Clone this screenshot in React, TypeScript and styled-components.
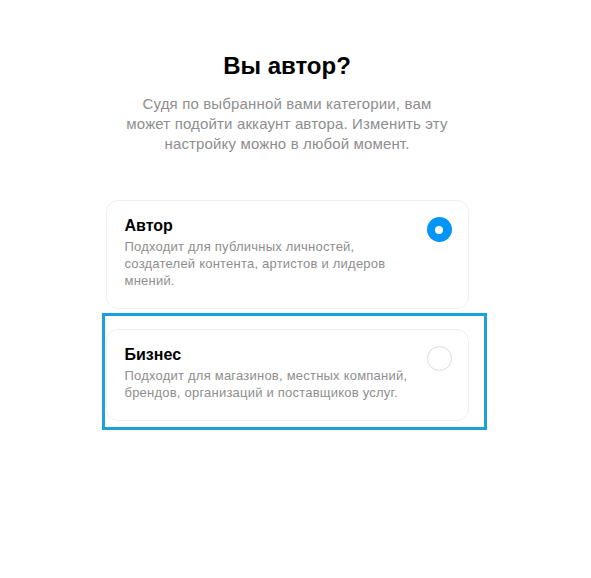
import React from "react";
import styled, { createGlobalStyle } from "styled-components";

const Global = createGlobalStyle`
  html, body { margin: 0; padding: 0; background: #ffffff; }
  body { font-family: "Liberation Sans", Arial, sans-serif; -webkit-font-smoothing: antialiased; }
`;

const Page = styled.main`
  width: 591px;
  min-height: 578px;
  box-sizing: border-box;
  padding: 51px 17px 0 0;
  display: flex;
  flex-direction: column;
  align-items: center;
`;

const Title = styled.h1`
  margin: 0;
  font-size: 24px;
  line-height: 30px;
  font-weight: 700;
  color: #000000;
`;

const Subtitle = styled.p`
  margin: 13px 0 0;
  font-size: 15px;
  line-height: 20px;
  letter-spacing: 0.15px;
  color: #8e8e8e;
  text-align: center;
`;

const Options = styled.div`
  margin-top: 46px;
  width: 363px;
  display: flex;
  flex-direction: column;
  gap: 20px;
`;

const CardWrap = styled.div`
  position: relative;
`;

const Highlight = styled.div`
  position: absolute;
  top: -16px;
  left: -4px;
  right: -18px;
  bottom: -9px;
  border: 3px solid #1ba0dc;
  pointer-events: none;
`;

const Card = styled.div`
  box-sizing: border-box;
  border: 1px solid #efefef;
  border-radius: 12px;
  padding: 15px 16px 19px 18px;
  display: flex;
  align-items: flex-start;
  justify-content: space-between;
  gap: 12px;
  background: #ffffff;
`;

const Texts = styled.div`
  display: flex;
  flex-direction: column;
`;

const CardTitle = styled.div`
  font-size: 16px;
  line-height: 20px;
  font-weight: 700;
  color: #000000;
`;

const CardDesc = styled.div`
  margin-top: 2px;
  font-size: 13px;
  line-height: 17px;
  letter-spacing: 0.22px;
  color: #8e8e8e;
`;

const Radio = styled.span<{ $checked?: boolean }>`
  flex: none;
  box-sizing: border-box;
  width: 25px;
  height: 25px;
  border-radius: 50%;
  margin-top: 1px;
  display: flex;
  align-items: center;
  justify-content: center;
  background: ${(p) => (p.$checked ? "#0095f6" : "#ffffff")};
  border: ${(p) => (p.$checked ? "none" : "1.5px solid #dbdbdb")};
`;

const Dot = styled.span`
  width: 8px;
  height: 8px;
  border-radius: 50%;
  background: #ffffff;
`;

export default function App() {
  return (
    <>
      <Global />
      <Page>
        <Title>Вы автор?</Title>
        <Subtitle>
          Судя по выбранной вами категории, вам
          <br />
          может подойти аккаунт автора. Изменить эту
          <br />
          настройку можно в любой момент.
        </Subtitle>
        <Options>
          <Card>
            <Texts>
              <CardTitle>Автор</CardTitle>
              <CardDesc>
                Подходит для публичных личностей,
                <br />
                создателей контента, артистов и лидеров
                <br />
                мнений.
              </CardDesc>
            </Texts>
            <Radio $checked>
              <Dot />
            </Radio>
          </Card>
          <CardWrap>
            <Card>
              <Texts>
                <CardTitle>Бизнес</CardTitle>
                <CardDesc>
                  Подходит для магазинов, местных компаний,
                  <br />
                  брендов, организаций и поставщиков услуг.
                </CardDesc>
              </Texts>
              <Radio />
            </Card>
            <Highlight />
          </CardWrap>
        </Options>
      </Page>
    </>
  );
}
